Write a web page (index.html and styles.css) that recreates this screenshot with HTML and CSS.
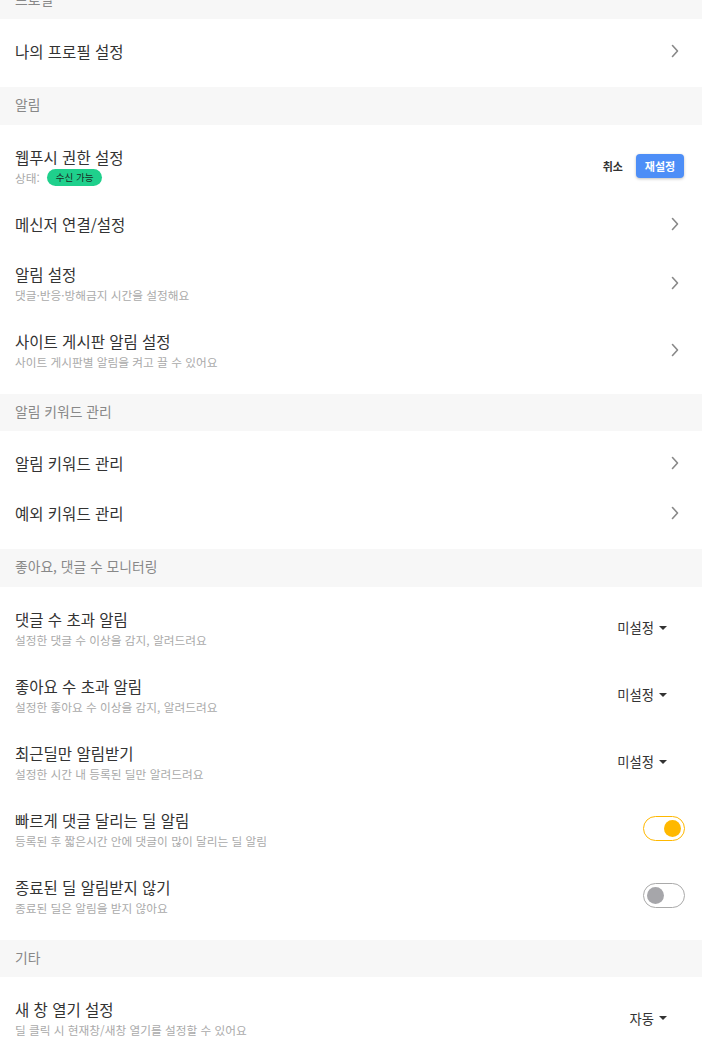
FILE: index.html
```html
<!DOCTYPE html>
<html lang="ko">
<head>
    <meta charset="UTF-8">
    <meta name="viewport" content="width=device-width, initial-scale=1.0">
    <title>설정</title>
    <link rel="stylesheet" href="styles.css">
</head>
<body>
    <div class="settings">
        <!-- 프로필 -->
        <div class="group-title">프로필</div>
        <ul class="group">
            <li class="item">
                <div class="item-title">나의 프로필 설정</div>
                <svg class="chevron" viewBox="0 0 24 24"><polyline points="9.5 6.5 14.5 12 9.5 17.5"/></svg>
            </li>
        </ul>

        <!-- 알림 -->
        <div class="group-title">알림</div>
        <ul class="group">
            <li class="item two-line">
                <div>
                    <div class="item-title">웹푸시 권한 설정</div>
                    <div class="item-desc">상태: <span class="badge">수신 가능</span></div>
                </div>
                <div class="actions">
                    <button class="btn-cancel">취소</button>
                    <button class="btn-reset">재설정</button>
                </div>
            </li>
            <li class="item">
                <div class="item-title">메신저 연결/설정</div>
                <svg class="chevron" viewBox="0 0 24 24"><polyline points="9.5 6.5 14.5 12 9.5 17.5"/></svg>
            </li>
            <li class="item two-line">
                <div>
                    <div class="item-title">알림 설정</div>
                    <div class="item-desc">댓글·반응·방해금지 시간을 설정해요</div>
                </div>
                <svg class="chevron" viewBox="0 0 24 24"><polyline points="9.5 6.5 14.5 12 9.5 17.5"/></svg>
            </li>
            <li class="item two-line">
                <div>
                    <div class="item-title">사이트 게시판 알림 설정</div>
                    <div class="item-desc">사이트 게시판별 알림을 켜고 끌 수 있어요</div>
                </div>
                <svg class="chevron" viewBox="0 0 24 24"><polyline points="9.5 6.5 14.5 12 9.5 17.5"/></svg>
            </li>
        </ul>

        <!-- 알림 키워드 관리 -->
        <div class="group-title">알림 키워드 관리</div>
        <ul class="group">
            <li class="item">
                <div class="item-title">알림 키워드 관리</div>
                <svg class="chevron" viewBox="0 0 24 24"><polyline points="9.5 6.5 14.5 12 9.5 17.5"/></svg>
            </li>
            <li class="item">
                <div class="item-title">예외 키워드 관리</div>
                <svg class="chevron" viewBox="0 0 24 24"><polyline points="9.5 6.5 14.5 12 9.5 17.5"/></svg>
            </li>
        </ul>

        <!-- 모니터링 -->
        <div class="group-title">좋아요, 댓글 수 모니터링</div>
        <ul class="group">
            <li class="item two-line">
                <div>
                    <div class="item-title">댓글 수 초과 알림</div>
                    <div class="item-desc">설정한 댓글 수 이상을 감지, 알려드려요</div>
                </div>
                <div class="dropdown">미설정<span class="caret"></span></div>
            </li>
            <li class="item two-line">
                <div>
                    <div class="item-title">좋아요 수 초과 알림</div>
                    <div class="item-desc">설정한 좋아요 수 이상을 감지, 알려드려요</div>
                </div>
                <div class="dropdown">미설정<span class="caret"></span></div>
            </li>
            <li class="item two-line">
                <div>
                    <div class="item-title">최근딜만 알림받기</div>
                    <div class="item-desc">설정한 시간 내 등록된 딜만 알려드려요</div>
                </div>
                <div class="dropdown">미설정<span class="caret"></span></div>
            </li>
            <li class="item two-line">
                <div>
                    <div class="item-title">빠르게 댓글 달리는 딜 알림</div>
                    <div class="item-desc">등록된 후 짧은시간 안에 댓글이 많이 달리는 딜 알림</div>
                </div>
                <div class="toggle on"><span class="knob"></span></div>
            </li>
            <li class="item two-line">
                <div>
                    <div class="item-title">종료된 딜 알림받지 않기</div>
                    <div class="item-desc">종료된 딜은 알림을 받지 않아요</div>
                </div>
                <div class="toggle"><span class="knob"></span></div>
            </li>
        </ul>

        <!-- 기타 -->
        <div class="group-title">기타</div>
        <ul class="group">
            <li class="item two-line">
                <div>
                    <div class="item-title">새 창 열기 설정</div>
                    <div class="item-desc">딜 클릭 시 현재창/새창 열기를 설정할 수 있어요</div>
                </div>
                <div class="dropdown">자동<span class="caret"></span></div>
            </li>
        </ul>
    </div>
</body>
</html>
```

FILE: styles.css
```css
body {
    margin: 0;
    background-color: #fff;
    color: #333;
    font-family: "Noto Sans CJK KR", "Noto Sans", sans-serif;
}

/* the list is scrolled a little, the first header is half hidden */
.settings {
    margin-top: -18.5px;
}

.group-title {
    height: 37.5px;
    display: flex;
    align-items: center;
    padding: 0 15px 3px;
    box-sizing: border-box;
    background-color: #f7f7f7;
    color: #888;
    font-size: 13.8px;
}

.group {
    list-style: none;
    margin: 0;
    padding: 9px 0;
}

.item {
    display: flex;
    align-items: center;
    justify-content: space-between;
    min-height: 50px;
    padding: 0 15px 4px;
    box-sizing: border-box;
}

.item.two-line {
    padding: 12px 15px 15px;
}

.item-title {
    font-size: 15.5px;
    line-height: 22px;
    color: #333;
}

.item-desc {
    display: flex;
    align-items: center;
    gap: 7px;
    margin-top: 1px;
    font-size: 11.7px;
    line-height: 17px;
    color: #aaa;
}

.badge {
    height: 17px;
    display: inline-flex;
    align-items: center;
    padding: 0 9px;
    border-radius: 9px;
    background-color: #1fd08c;
    color: #1d2b24;
    font-size: 9.5px;
}

.chevron {
    width: 24px;
    height: 24px;
    fill: none;
    stroke: #888;
    stroke-width: 1.6;
    stroke-linecap: round;
    stroke-linejoin: round;
}

/* 웹푸시 buttons */
.actions {
    display: flex;
    align-items: center;
    gap: 5px;
    margin-right: 3px;
}

.btn-cancel {
    border: none;
    background: none;
    padding: 0 8px;
    font-family: inherit;
    font-size: 11px;
    font-weight: bold;
    color: #333;
}

.btn-reset {
    width: 48px;
    height: 24px;
    border: none;
    border-radius: 4px;
    background-color: #4d8ef7;
    box-shadow: 0 1px 3px rgba(0, 0, 0, 0.25);
    font-family: inherit;
    font-size: 11px;
    font-weight: bold;
    color: #fff;
}

.dropdown {
    display: flex;
    align-items: center;
    gap: 5px;
    margin-right: 20px;
    font-size: 13.3px;
    color: #333;
}

.caret {
    width: 0;
    height: 0;
    border-left: 4px solid transparent;
    border-right: 4px solid transparent;
    border-top: 4px solid #333;
}

.toggle {
    width: 42px;
    height: 25px;
    display: flex;
    align-items: center;
    padding: 0 3px;
    margin-right: 2px;
    border: 1px solid #aaa;
    border-radius: 13px;
    box-sizing: border-box;
}

.toggle .knob {
    width: 17px;
    height: 17px;
    border-radius: 50%;
    background-color: #a6a6aa;
}

.toggle.on {
    justify-content: flex-end;
    border-color: #ffb800;
}

.toggle.on .knob {
    background-color: #ffb800;
}
```
